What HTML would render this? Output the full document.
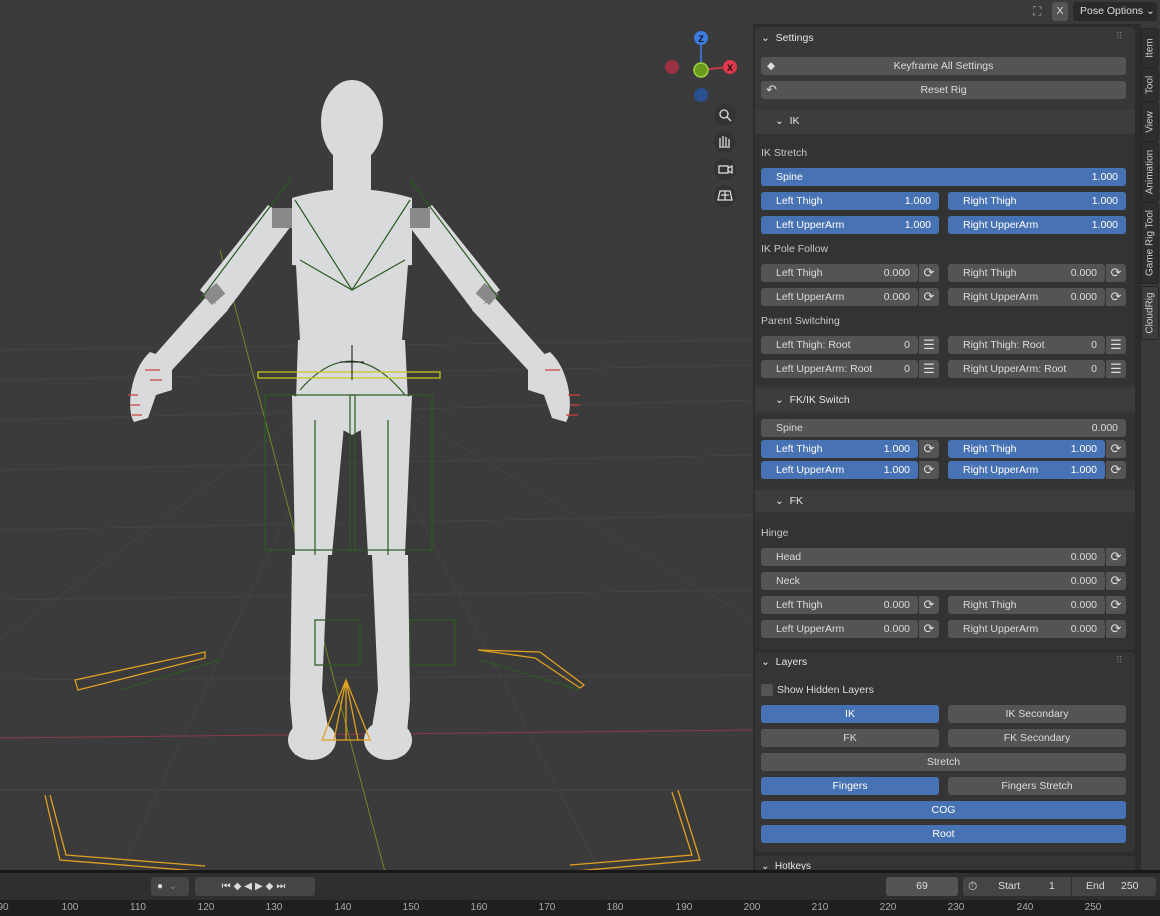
<!DOCTYPE html>
<html><head><meta charset="utf-8"><style>
*{margin:0;padding:0;box-sizing:border-box}
body{width:1160px;height:916px;overflow:hidden;background:#3a3a3a;font-family:"Liberation Sans","DejaVu Sans",sans-serif;font-size:10.5px;color:#dcdcdc;position:relative}
.a{position:absolute}
.b{position:absolute;height:18px;border-radius:3px;background:#545454;line-height:18px;padding:0 8px 0 15px;white-space:nowrap}
.bl{background:#4772b3;color:#fff}
.c{text-align:center;padding:0}
.v{position:absolute;right:8px;top:0}
.ic{position:absolute;width:20px;height:18px;border-radius:0 3px 3px 0;background:#545454;color:#ddd;text-align:center;line-height:18px;font-size:13px}
.lb{position:absolute;left:761px;color:#c8c8c8}
.hd{position:absolute;left:775px;color:#e6e6e6}
.tab{position:absolute;left:1141px;width:18px;background:#2e2e2e;border-radius:0 3px 3px 0;border:1px solid #262626}
.tab span{position:absolute;left:50%;top:50%;transform:translate(-50%,-50%) rotate(-90deg);white-space:nowrap;font-size:10px;color:#ccc}
.rl{position:absolute;top:902px;font-size:10px;color:#aaa;transform:translateX(-50%)}
</style></head><body>
<svg class="a" style="left:0;top:0" width="753" height="872">
<rect width="753" height="872" fill="#3b3b3b"/>
<g stroke="#444" stroke-width="1">
<line x1="0" y1="420" x2="753" y2="400"/><line x1="0" y1="470" x2="753" y2="455"/><line x1="0" y1="530" x2="753" y2="515"/><line x1="0" y1="600" x2="753" y2="590"/><line x1="0" y1="680" x2="753" y2="675"/><line x1="0" y1="790" x2="753" y2="790"/><line x1="0" y1="380" x2="753" y2="365"/><line x1="0" y1="350" x2="753" y2="340"/>
<line x1="350" y1="380" x2="0" y2="640"/><line x1="350" y1="380" x2="753" y2="620"/><line x1="350" y1="380" x2="120" y2="872"/><line x1="350" y1="380" x2="600" y2="872"/>
</g>
<line x1="0" y1="738" x2="753" y2="730" stroke="#8a3a44" stroke-width="1"/>
<line x1="220" y1="250" x2="385" y2="872" stroke="#6b8a2a" stroke-width="1"/>
<g fill="#d9dadc">
<path d="M200 290 L268 205 L294 222 L226 312 Z"/>
<path d="M500 290 L432 205 L406 222 L474 312 Z"/>
<path d="M205 298 L152 358 L172 370 L228 310 Z"/>
<path d="M495 298 L548 358 L528 370 L472 310 Z"/>
<path d="M150 352 C130 370 126 410 134 422 L148 418 L156 395 L172 390 L172 360 Z"/>
<path d="M550 352 C570 370 574 410 566 422 L552 418 L544 395 L528 390 L528 360 Z"/>
<ellipse cx="352" cy="122" rx="31" ry="42"/>
<rect x="333" y="150" width="38" height="45"/>
<path d="M292 198 Q352 180 412 198 L412 265 Q352 270 292 265 Z"/>
<path d="M296 265 L408 265 L402 340 L300 340 Z"/>
<path d="M298 340 L405 340 L408 400 L370 425 L352 435 L334 425 L296 400 Z"/>
<path d="M292 395 L345 415 L332 555 L295 555 Z"/>
<path d="M412 395 L360 415 L368 555 L405 555 Z"/>
<path d="M292 555 L328 555 L322 690 L330 740 L295 755 L290 700 Z"/>
<path d="M408 555 L372 555 L378 690 L370 740 L405 755 L410 700 Z"/>
<ellipse cx="312" cy="740" rx="24" ry="20"/>
<ellipse cx="388" cy="740" rx="24" ry="20"/>
</g>
<g fill="#8a8a8a"><rect x="272" y="208" width="20" height="20"/><rect x="410" y="208" width="20" height="20"/><rect x="205" y="287" width="18" height="14" transform="rotate(-40 214 294)"/><rect x="478" y="287" width="18" height="14" transform="rotate(40 487 294)"/></g>
<g fill="none" stroke="#2c5a22" stroke-width="1.2">
<path d="M295 200 L352 290 L410 200"/><path d="M300 260 L352 290 L405 260"/>
<rect x="265" y="395" width="90" height="155"/><rect x="350" y="395" width="82" height="155"/>
<path d="M315 420 L315 555 M388 420 L388 555"/><path d="M315 620 L360 620 L360 665 L315 665 Z M410 620 L455 620 L455 665 L410 665 Z"/>
<path d="M300 390 Q352 330 405 395"/><path d="M200 300 L290 180 M500 300 L410 180"/>
<path d="M120 690 L220 660 M480 660 L580 690"/>
</g>
<g fill="none" stroke="#e0a020" stroke-width="1.3">
<path d="M78 690 L75 680 L205 652 L205 658 Z"/><path d="M478 650 L540 652 L584 685 L580 688 L535 658 Z"/>
<path d="M45 795 L60 860 L210 872 M50 795 L66 855 L205 866"/><path d="M678 790 L700 860 L565 872 M672 792 L692 855 L570 865"/>
<path d="M346 680 L322 740 L370 740 Z M346 680 L334 740 M346 680 L358 740 M346 680 L346 740"/>
<path d="M258 372 L440 372 L440 378 L258 378 Z" stroke="#c8c820"/>
</g>
<g stroke="#d04040" stroke-width="1.2" fill="none"><path d="M128 395 l10 0 M130 405 l10 0 M132 415 l10 0 M145 370 l15 0 M150 380 l12 0 M545 370 l15 0 M568 395 l12 0 M570 405 l10 0 M566 415 l12 0"/></g>
<circle cx="352" cy="362" r="8" fill="none" stroke="#ddd" stroke-dasharray="3 2"/><path d="M352 345 V380 M340 362 H364" stroke="#111"/>
<line x1="701" y1="70" x2="701" y2="40" stroke="#3a6ec0" stroke-width="2"/><line x1="701" y1="70" x2="728" y2="67" stroke="#c03a48" stroke-width="2"/>
<circle cx="701" cy="38" r="7" fill="#3c7be0"/><text x="701" y="42" font-size="9" font-weight="bold" text-anchor="middle" fill="#111">Z</text>
<circle cx="730" cy="67" r="7" fill="#e0384c"/><text x="730" y="71" font-size="9" font-weight="bold" text-anchor="middle" fill="#111">X</text>
<circle cx="672" cy="67" r="7" fill="#9a3242"/><circle cx="701" cy="95" r="7" fill="#2a5090"/>
<circle cx="701" cy="70" r="7" fill="#6a9a20" stroke="#a0d040" stroke-width="1.5"/>
<g fill="#333"><circle cx="725" cy="115" r="11"/><circle cx="725" cy="142" r="11"/><circle cx="725" cy="169" r="11"/><circle cx="725" cy="196" r="11"/></g>
<g fill="none" stroke="#ddd" stroke-width="1.3"><circle cx="724" cy="114" r="4"/><path d="M727 117 L731 121"/><path d="M720 146 V138 M723 146 V136 M726 146 V137 M729 146 V139 M719 147 H730"/><rect x="719" y="166" width="9" height="7"/><path d="M728 168 L732 166 V173 L728 171"/><path d="M718 200 L720 191 H730 L732 200 Z M721 195 H729 M725 191 V200"/></g>
</svg>
<div class="a" style="left:753px;top:0;width:407px;height:24px;background:#3a3a3a"></div>
<div class="a" style="left:1033px;top:4px;color:#aaa;font-size:12px">⛶</div>
<div class="a" style="left:1052px;top:2px;width:16px;height:19px;background:#545454;border-radius:3px;text-align:center;line-height:19px;color:#ddd">X</div>
<div class="a" style="left:1073px;top:2px;width:84px;height:19px;background:#2a2a2a;border-radius:3px;line-height:19px;padding-left:7px;color:#ddd">Pose Options ⌄</div>
<div class="a" style="left:753px;top:24px;width:388px;height:848px;background:#2c2c2c"></div>
<div class="a" style="left:755px;top:27px;width:380px;height:622px;background:#353535;border-radius:4px"></div>
<div class="a" style="left:755px;top:27px;width:380px;height:370px;background:#383838;border-radius:4px"></div>
<div class="a" style="left:755px;top:110px;width:380px;height:24px;background:#3d3d3d"></div>
<div class="a" style="left:755px;top:134px;width:380px;height:252px;background:#333"></div>
<div class="a" style="left:755px;top:389px;width:380px;height:22px;background:#3d3d3d"></div>
<div class="a" style="left:755px;top:413px;width:380px;height:72px;background:#333"></div>
<div class="a" style="left:755px;top:490px;width:380px;height:22px;background:#3d3d3d"></div>
<div class="a" style="left:755px;top:514px;width:380px;height:134px;background:#333"></div>
<div class="a" style="left:755px;top:652px;width:380px;height:200px;background:#353535;border-radius:4px"></div>
<div class="a" style="left:755px;top:856px;width:380px;height:16px;background:#353535;border-radius:4px"></div>

<div class="hd" style="left:761px;top:32px">⌄&nbsp; Settings</div><div class="a" style="left:1116px;top:31px;color:#777;font-size:9px">⠿</div>
<div class="b c" style="left:761px;top:57px;width:365px">Keyframe All Settings<span class="a" style="left:6px;top:0">◆</span></div>
<div class="b c" style="left:761px;top:81px;width:365px">Reset Rig<span class="a" style="left:5px;top:0;font-size:13px">↶</span></div>
<div class="hd" style="top:115px">⌄&nbsp; IK</div>
<div class="lb" style="top:147px">IK Stretch</div>
<div class="b bl" style="left:761px;top:168px;width:365px">Spine<span class="v">1.000</span></div>
<div class="b bl" style="left:761px;top:192px;width:178px">Left Thigh<span class="v">1.000</span></div>
<div class="b bl" style="left:948px;top:192px;width:178px">Right Thigh<span class="v">1.000</span></div>
<div class="b bl" style="left:761px;top:216px;width:178px">Left UpperArm<span class="v">1.000</span></div>
<div class="b bl" style="left:948px;top:216px;width:178px">Right UpperArm<span class="v">1.000</span></div>
<div class="lb" style="top:243px">IK Pole Follow</div>
<div class="b" style="left:761px;top:264px;width:157px">Left Thigh<span class="v">0.000</span></div><div class="ic" style="left:919px;top:264px">⟳</div>
<div class="b" style="left:948px;top:264px;width:157px">Right Thigh<span class="v">0.000</span></div><div class="ic" style="left:1106px;top:264px">⟳</div>
<div class="b" style="left:761px;top:288px;width:157px">Left UpperArm<span class="v">0.000</span></div><div class="ic" style="left:919px;top:288px">⟳</div>
<div class="b" style="left:948px;top:288px;width:157px">Right UpperArm<span class="v">0.000</span></div><div class="ic" style="left:1106px;top:288px">⟳</div>
<div class="lb" style="top:315px">Parent Switching</div>
<div class="b" style="left:761px;top:336px;width:157px">Left Thigh: Root<span class="v">0</span></div><div class="ic" style="left:919px;top:336px">☰</div>
<div class="b" style="left:948px;top:336px;width:157px">Right Thigh: Root<span class="v">0</span></div><div class="ic" style="left:1106px;top:336px">☰</div>
<div class="b" style="left:761px;top:360px;width:157px">Left UpperArm: Root<span class="v">0</span></div><div class="ic" style="left:919px;top:360px">☰</div>
<div class="b" style="left:948px;top:360px;width:157px">Right UpperArm: Root<span class="v">0</span></div><div class="ic" style="left:1106px;top:360px">☰</div>
<div class="hd" style="top:394px">⌄&nbsp; FK/IK Switch</div>
<div class="b" style="left:761px;top:419px;width:365px">Spine<span class="v">0.000</span></div>
<div class="b bl" style="left:761px;top:440px;width:157px">Left Thigh<span class="v">1.000</span></div><div class="ic" style="left:919px;top:440px">⟳</div>
<div class="b bl" style="left:948px;top:440px;width:157px">Right Thigh<span class="v">1.000</span></div><div class="ic" style="left:1106px;top:440px">⟳</div>
<div class="b bl" style="left:761px;top:461px;width:157px">Left UpperArm<span class="v">1.000</span></div><div class="ic" style="left:919px;top:461px">⟳</div>
<div class="b bl" style="left:948px;top:461px;width:157px">Right UpperArm<span class="v">1.000</span></div><div class="ic" style="left:1106px;top:461px">⟳</div>
<div class="hd" style="top:495px">⌄&nbsp; FK</div>
<div class="lb" style="top:527px">Hinge</div>
<div class="b" style="left:761px;top:548px;width:344px">Head<span class="v">0.000</span></div><div class="ic" style="left:1106px;top:548px">⟳</div>
<div class="b" style="left:761px;top:572px;width:344px">Neck<span class="v">0.000</span></div><div class="ic" style="left:1106px;top:572px">⟳</div>
<div class="b" style="left:761px;top:596px;width:157px">Left Thigh<span class="v">0.000</span></div><div class="ic" style="left:919px;top:596px">⟳</div>
<div class="b" style="left:948px;top:596px;width:157px">Right Thigh<span class="v">0.000</span></div><div class="ic" style="left:1106px;top:596px">⟳</div>
<div class="b" style="left:761px;top:620px;width:157px">Left UpperArm<span class="v">0.000</span></div><div class="ic" style="left:919px;top:620px">⟳</div>
<div class="b" style="left:948px;top:620px;width:157px">Right UpperArm<span class="v">0.000</span></div><div class="ic" style="left:1106px;top:620px">⟳</div>
<div class="hd" style="left:761px;top:656px">⌄&nbsp; Layers</div><div class="a" style="left:1116px;top:655px;color:#777;font-size:9px">⠿</div>
<div class="a" style="left:761px;top:684px;width:12px;height:12px;background:#545454;border-radius:2px"></div><div class="a" style="left:777px;top:684px">Show Hidden Layers</div>
<div class="b bl c" style="left:761px;top:705px;width:178px">IK</div>
<div class="b c" style="left:948px;top:705px;width:178px">IK Secondary</div>
<div class="b c" style="left:761px;top:729px;width:178px">FK</div>
<div class="b c" style="left:948px;top:729px;width:178px">FK Secondary</div>
<div class="b c" style="left:761px;top:753px;width:365px">Stretch</div>
<div class="b bl c" style="left:761px;top:777px;width:178px">Fingers</div>
<div class="b c" style="left:948px;top:777px;width:178px">Fingers Stretch</div>
<div class="b bl c" style="left:761px;top:801px;width:365px">COG</div>
<div class="b bl c" style="left:761px;top:825px;width:365px">Root</div>
<div class="hd" style="left:761px;top:861px;font-size:10px">⌄&nbsp; Hotkeys</div>
<div class="tab" style="top:28px;height:40px"><span>Item</span></div>
<div class="tab" style="top:68px;height:34px"><span>Tool</span></div>
<div class="tab" style="top:102px;height:40px"><span>View</span></div>
<div class="tab" style="top:142px;height:60px"><span>Animation</span></div>
<div class="tab" style="top:202px;height:82px"><span>Game Rig Tool</span></div>
<div class="tab" style="top:286px;height:54px;background:#3d3d3d"><span>CloudRig</span></div>
<div class="a" style="left:0;top:870px;width:1160px;height:3px;background:#181818"></div>
<div class="a" style="left:0;top:873px;width:1160px;height:27px;background:#2f2f2f"></div>
<div class="a" style="left:151px;top:877px;width:38px;height:19px;background:#454545;border-radius:3px;color:#ddd;line-height:19px;padding-left:6px;font-size:10px">●&nbsp; <span style="color:#888">⌄</span></div>
<div class="a" style="left:195px;top:877px;width:120px;height:19px;background:#454545;border-radius:3px;color:#ddd;line-height:19px;text-align:center;font-size:10px;letter-spacing:3px">⏮◆◀▶◆⏭</div>
<div class="a" style="left:886px;top:877px;width:72px;height:19px;background:#545454;border-radius:3px;line-height:19px;text-align:center">69</div>
<div class="a" style="left:963px;top:877px;width:193px;height:19px;background:#454545;border-radius:3px;line-height:19px"><span class="a" style="left:5px;font-size:12px">⏱</span><span class="a" style="left:35px">Start</span><span class="a" style="left:86px">1</span><span class="a" style="left:108px;top:0;height:19px;border-left:1px solid #2f2f2f"></span><span class="a" style="left:123px">End</span><span class="a" style="left:158px">250</span></div>
<div class="a" style="left:0;top:900px;width:1160px;height:16px;background:#1f1f1f"></div>
<div class="rl" style="left:3px">90</div><div class="rl" style="left:70px">100</div><div class="rl" style="left:138px">110</div><div class="rl" style="left:206px">120</div><div class="rl" style="left:274px">130</div><div class="rl" style="left:343px">140</div><div class="rl" style="left:411px">150</div><div class="rl" style="left:479px">160</div><div class="rl" style="left:547px">170</div><div class="rl" style="left:615px">180</div><div class="rl" style="left:684px">190</div><div class="rl" style="left:752px">200</div><div class="rl" style="left:820px">210</div><div class="rl" style="left:888px">220</div><div class="rl" style="left:956px">230</div><div class="rl" style="left:1025px">240</div><div class="rl" style="left:1093px">250</div>
</body></html>
